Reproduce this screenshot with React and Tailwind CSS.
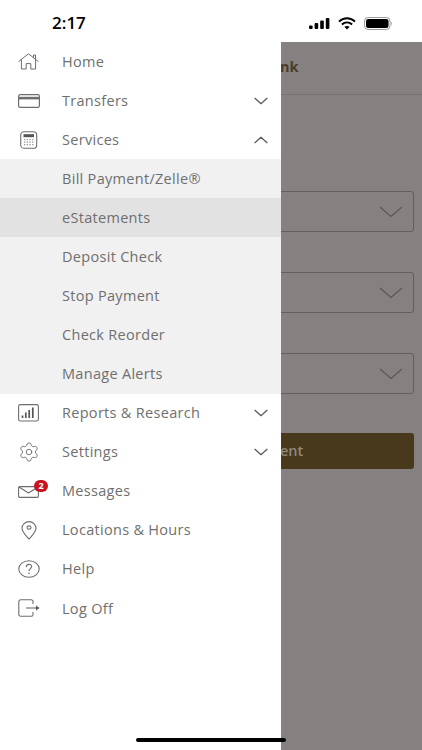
import React from 'react';
import { ChevronDown, ChevronUp, Settings } from 'lucide-react';

const stroke = '#6e6e6e';

const HomeIcon = () => (
  <svg width="21" height="17" viewBox="0 0 21 17" fill="none" stroke={stroke} strokeWidth="1" strokeLinejoin="round" strokeLinecap="round">
    <path d="M0.8 8.4 L10.5 0.8 L20.2 8.4" />
    <path d="M15.5 4.5 V2 H17.5 V6.4" />
    <path d="M3.4 6.6 V16 H8.2 V10.6 H12.8 V16 H17.6 V6.6" />
  </svg>
);

const CardIcon = () => (
  <svg width="22" height="14" viewBox="0 0 22 14" fill="none">
    <rect x="0.6" y="0.6" width="20.8" height="12.8" rx="1.6" stroke={stroke} strokeWidth="1.2" />
    <rect x="0.6" y="2.8" width="20.8" height="2.6" fill={stroke} />
  </svg>
);

const CalcIcon = () => (
  <svg width="18" height="18" viewBox="0 0 18 18" fill="none">
    <rect x="0.7" y="0.7" width="16" height="16.6" rx="3.4" stroke={stroke} strokeWidth="1.1" />
    <rect x="3.5" y="3.2" width="10.5" height="3" fill="#555" />
    {[8, 10.5, 13].map((y) =>
      [4, 6.7, 9.4, 12.1].map((x) => <rect key={`${x}-${y}`} x={x} y={y} width="1.3" height="1.3" fill="#999" />)
    )}
  </svg>
);

const ChartIcon = () => (
  <svg width="21" height="18" viewBox="0 0 21 18" fill="none">
    <rect x="0.6" y="0.6" width="19.8" height="16.4" rx="1.8" stroke={stroke} strokeWidth="1.1" />
    <path d="M4.5 14 V11.5 M7.8 14 V8.5 M11.2 14 V6 M14.8 14 V3.5" stroke="#555" strokeWidth="1.7" />
  </svg>
);

const MailIcon = () => (
  <svg width="21" height="12" viewBox="0 0 21 12" fill="none" stroke={stroke} strokeWidth="1.1" strokeLinejoin="round" className="translate-y-[1px]">
    <rect x="0.6" y="0.6" width="19.8" height="10.8" rx="1.2" />
    <path d="M1 1 L10.5 7 L20 1" />
  </svg>
);

const PinIcon = () => (
  <svg width="16" height="19" viewBox="0 0 16 19" fill="none" stroke={stroke} strokeWidth="1.1" strokeLinejoin="round">
    <path d="M8 18 C5 14.5 1 11 1 7.2 A7 6.6 0 0 1 15 7.2 C15 11 11 14.5 8 18 Z" />
    <ellipse cx="8" cy="6.6" rx="2" ry="1.7" />
  </svg>
);

const HelpIcon = () => (
  <svg width="22" height="18" viewBox="0 0 22 18" fill="none">
    <ellipse cx="11" cy="9" rx="10.2" ry="8.3" stroke={stroke} strokeWidth="1.1" />
    <path d="M8.3 6.8 C8.3 3.6 13.7 3.6 13.7 6.6 C13.7 8.6 11 8.6 11 10.8" stroke={stroke} strokeWidth="1.1" strokeLinecap="round" />
    <circle cx="11" cy="13.2" r="0.8" fill={stroke} />
  </svg>
);

const LogOffIcon = () => (
  <svg width="22" height="18" viewBox="0 0 22 18" fill="none">
    <path d="M15 5 V2.6 A1.8 1.8 0 0 0 13.2 0.8 H2.6 A1.8 1.8 0 0 0 0.8 2.6 V15.4 A1.8 1.8 0 0 0 2.6 17.2 H13.2 A1.8 1.8 0 0 0 15 15.4 V13" stroke={stroke} strokeWidth="1.1" />
    <path d="M8 9 H19" stroke={stroke} strokeWidth="1.1" />
    <path d="M18 6.6 L21.5 9 L18 11.4 Z" fill="#555" />
  </svg>
);

const StatusIcons = () => (
  <div className="flex items-center gap-[8px]">
    <svg width="21" height="11" viewBox="0 0 21 11" fill="#000">
      <rect x="0" y="7.4" width="3.6" height="3.6" rx="1" />
      <rect x="5.6" y="5" width="3.6" height="6" rx="1" />
      <rect x="11.2" y="2.6" width="3.6" height="8.4" rx="1" />
      <rect x="16.8" y="0" width="3.6" height="11" rx="1" />
    </svg>
    <svg width="18" height="13" viewBox="0 0 18 13" fill="none" stroke="#000" strokeWidth="2">
      <path d="M1 4.6 C5.6 0.2 12.4 0.2 17 4.6" />
      <path d="M3.9 7.5 C6.9 4.7 11.1 4.7 14.1 7.5" />
      <path d="M9 12.4 L6.4 9.8 C7.9 8.6 10.1 8.6 11.6 9.8 Z" fill="#000" stroke="none" />
    </svg>
    <svg width="29" height="13" viewBox="0 0 29 13" fill="none">
      <rect x="0.5" y="0.5" width="25.5" height="12" rx="3.6" stroke="#999" />
      <rect x="2" y="2" width="22.5" height="9" rx="2.2" fill="#000" />
      <path d="M27.2 4.5 C28.2 4.9 28.2 8.1 27.2 8.5 Z" fill="#999" />
    </svg>
  </div>
);

const MenuRow = ({ icon, label, badge, chevron }) => (
  <div className="relative flex h-[39.07px] items-center">
    <div className="flex w-[62px] shrink-0 items-center justify-center pr-[5px]">{icon}</div>
    <span className="flex-1 text-[14.5px] tracking-[0.3px] text-[#6f6f6f]">{label}</span>
    {badge && (
      <span className="absolute left-[34px] top-[8px] flex h-[12px] w-[14px] items-center justify-center rounded-full bg-[#c8141e] text-[9px] font-bold leading-none text-white">
        {badge}
      </span>
    )}
    {chevron === 'down' && <ChevronDown className="mr-[9px] h-[22px] w-[22px] scale-x-110 text-[#5a5a5a]" strokeWidth={1.2} />}
    {chevron === 'up' && <ChevronUp className="mr-[9px] h-[22px] w-[22px] scale-x-110 text-[#5a5a5a]" strokeWidth={1.2} />}
  </div>
);

const SubRow = ({ label, active }) => (
  <div className={`flex h-[39.07px] items-center pl-[62px] text-[14.5px] tracking-[0.3px] text-[#6f6f6f] ${active ? 'bg-[#e2e2e2]' : ''}`}>
    {label}
  </div>
);

const DimSelect = ({ className }) => (
  <div className={`-ml-2 mr-[8px] flex h-[41px] items-center justify-end rounded-[3px] border border-[#635f5e] pr-[10px] ${className}`}>
    <svg width="24" height="12" viewBox="0 0 24 12" fill="none" stroke="#5a5655" strokeWidth="1.1">
      <path d="M1 1 L12 10.5 L23 1" />
    </svg>
  </div>
);

const App = () => {
  return (
    <div className="relative h-[750px] w-[422px] overflow-hidden bg-white font-['Open_Sans',sans-serif]">
      {/* Status bar */}
      <div className="flex h-[42px] items-center justify-between pl-[52px] pr-[29px] pt-[4px]">
        <span className="text-[17px] font-semibold text-black">2:17</span>
        <StatusIcons />
      </div>

      <div className="flex h-[708px]">
        {/* Drawer */}
        <div className="w-[281px] shrink-0 bg-white">
          <MenuRow icon={<HomeIcon />} label="Home" />
          <MenuRow icon={<CardIcon />} label="Transfers" chevron="down" />
          <MenuRow icon={<CalcIcon />} label="Services" chevron="up" />
          <div className="bg-[#f1f1f1]">
            <SubRow label="Bill Payment/Zelle®" />
            <SubRow label="eStatements" active />
            <SubRow label="Deposit Check" />
            <SubRow label="Stop Payment" />
            <SubRow label="Check Reorder" />
            <SubRow label="Manage Alerts" />
          </div>
          <MenuRow icon={<ChartIcon />} label="Reports & Research" chevron="down" />
          <MenuRow icon={<Settings className="h-[22px] w-[22px] text-[#6e6e6e]" strokeWidth={1} />} label="Settings" chevron="down" />
          <MenuRow icon={<MailIcon />} label="Messages" badge="2" />
          <MenuRow icon={<PinIcon />} label="Locations & Hours" />
          <MenuRow icon={<HelpIcon />} label="Help" />
          <MenuRow icon={<LogOffIcon />} label="Log Off" />
        </div>

        {/* Dimmed page behind the drawer */}
        <div className="flex-1 overflow-hidden bg-[#858180]">
          <div className="flex h-[53px] items-center border-b border-[#767271] pb-[2px]">
            <span className="-ml-[1px] text-[14.5px] font-bold text-[#4a3d24]">nk</span>
          </div>
          <div className="pt-[96px]">
            <DimSelect />
            <DimSelect className="mt-[40px]" />
            <DimSelect className="mt-[40px]" />
            <div className="-ml-2 mr-[8px] mt-[39px] flex h-[36px] items-center rounded-[3px] bg-[#48391c] pl-2 text-[14.5px] font-semibold text-[#8f8a7d]">
              <span className="-ml-[1px]">ent</span>
            </div>
          </div>
        </div>
      </div>

      {/* Home indicator */}
      <div className="absolute bottom-[8px] left-[136px] h-[4px] w-[150px] rounded-full bg-black" />
    </div>
  );
};

export default App;
